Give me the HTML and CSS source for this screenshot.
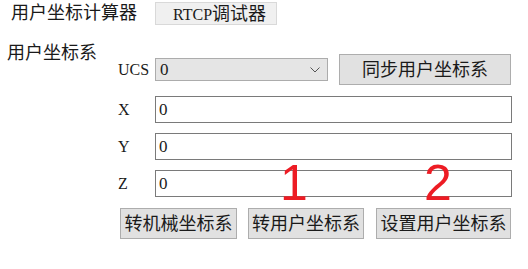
FILE: index.html
```html
<!DOCTYPE html>
<html lang="zh-CN">
<head>
    <meta charset="UTF-8">
    <link rel="stylesheet" href="styles.css">
    <title>用户坐标计算器</title>
</head>
<body>
    <div class="tabs">
        <div class="tab active">用户坐标计算器</div>
        <div class="tab"><span class="lat">RTCP</span>调试器</div>
    </div>

    <div class="page">
        <div class="group-title">用户坐标系</div>

        <div class="form">
            <div class="row">
                <label class="lbl">UCS</label>
                <div class="field">
                    <div class="combo">
                        <span class="num">0</span>
                        <svg class="chev" width="10" height="6" viewBox="0 0 10 6">
                            <path d="M0.5 0.5 L5 5 L9.5 0.5" fill="none" stroke="#555" stroke-width="1"/>
                        </svg>
                    </div>
                    <button class="btn sync">同步用户坐标系</button>
                </div>
            </div>
            <div class="row gap11">
                <label class="lbl">X</label>
                <input class="txt" type="text" value="0">
            </div>
            <div class="row">
                <label class="lbl">Y</label>
                <input class="txt" type="text" value="0">
            </div>
            <div class="row">
                <label class="lbl">Z</label>
                <input class="txt" type="text" value="0">
            </div>
            <div class="actions">
                <button class="btn w117">转机械坐标系</button>
                <button class="btn w116">转用户坐标系</button>
                <button class="btn w135">设置用户坐标系</button>
            </div>
        </div>

        <div class="mark one">1</div>
        <div class="mark two">2</div>
    </div>
</body>
</html>
```

FILE: styles.css
```css
body {
    margin: 0;
    background: #fff;
    color: #1a1a1a;
    font-family: "Liberation Serif", "Noto Sans CJK SC", serif;
    font-size: 18px;
    width: 528px;
    height: 269px;
    overflow: hidden;
}

.lat {
    font-size: 16px;
}

/* tab strip */
.tabs {
    display: flex;
    align-items: flex-start;
    height: 28px;
}

.tab {
    box-sizing: border-box;
    height: 23px;
    margin-top: 2px;
    width: 122px;
    padding-left: 17px;
    line-height: 23px;
    background: #f0f0f0;
    border: 1px solid #d9d9d9;
    white-space: nowrap;
}

.tab.active {
    width: 155px;
    height: 28px;
    margin-top: 0;
    padding: 3px 0 0 11px;
    line-height: 20px;
    background: #fff;
    border: none;
}

/* page */
.page {
    position: relative;
    display: flex;
    align-items: flex-start;
    height: 241px;
}

.group-title {
    width: 111px;
    padding-left: 7px;
    margin-top: 16px;
    line-height: 18px;
    white-space: nowrap;
}

.form {
    margin-top: 26px;
    display: flex;
    flex-direction: column;
    gap: 10px;
    width: 394px;
}

.row {
    display: flex;
    align-items: center;
}

.row.gap11 {
    margin-top: 1px;
}

.lbl {
    width: 37px;
    font-size: 16px;
    line-height: 18px;
}

.field {
    display: flex;
    align-items: center;
    gap: 11px;
}

.combo {
    box-sizing: border-box;
    width: 173px;
    height: 23px;
    display: flex;
    align-items: center;
    justify-content: space-between;
    padding: 0 7px 0 4px;
    background: #e5e5e5;
    border: 1px solid #acacac;
}

.num {
    font-size: 17px;
    line-height: 18px;
}

.chev {
    display: block;
}

.txt {
    box-sizing: border-box;
    width: 357px;
    height: 27px;
    margin: 0;
    padding: 0 0 0 3px;
    border: 1px solid #7a7a7a;
    background: #fff;
    color: #1a1a1a;
    font-family: "Liberation Serif", serif;
    font-size: 17px;
    outline: none;
}

.btn {
    box-sizing: border-box;
    height: 31px;
    margin: 0;
    padding: 0;
    background: #e1e1e1;
    border: 1px solid #adadad;
    color: #1a1a1a;
    font-family: "Liberation Serif", "Noto Sans CJK SC", serif;
    font-size: 18px;
    line-height: 18px;
    white-space: nowrap;
}

.btn.sync {
    width: 172px;
}

.actions {
    display: flex;
    gap: 11px;
    margin-top: 1px;
    padding-left: 2px;
}

.w117 { width: 117px; }
.w116 { width: 116px; }
.w135 { width: 135px; margin-left: 1px; }

/* red annotation numbers drawn over the form */
.mark {
    position: absolute;
    font-family: "Liberation Sans", sans-serif;
    font-size: 50px;
    line-height: 50px;
    color: #ed1c24;
}

.mark.one {
    left: 280px;
    top: 130px;
}

.mark.two {
    left: 424px;
    top: 130px;
}
```
